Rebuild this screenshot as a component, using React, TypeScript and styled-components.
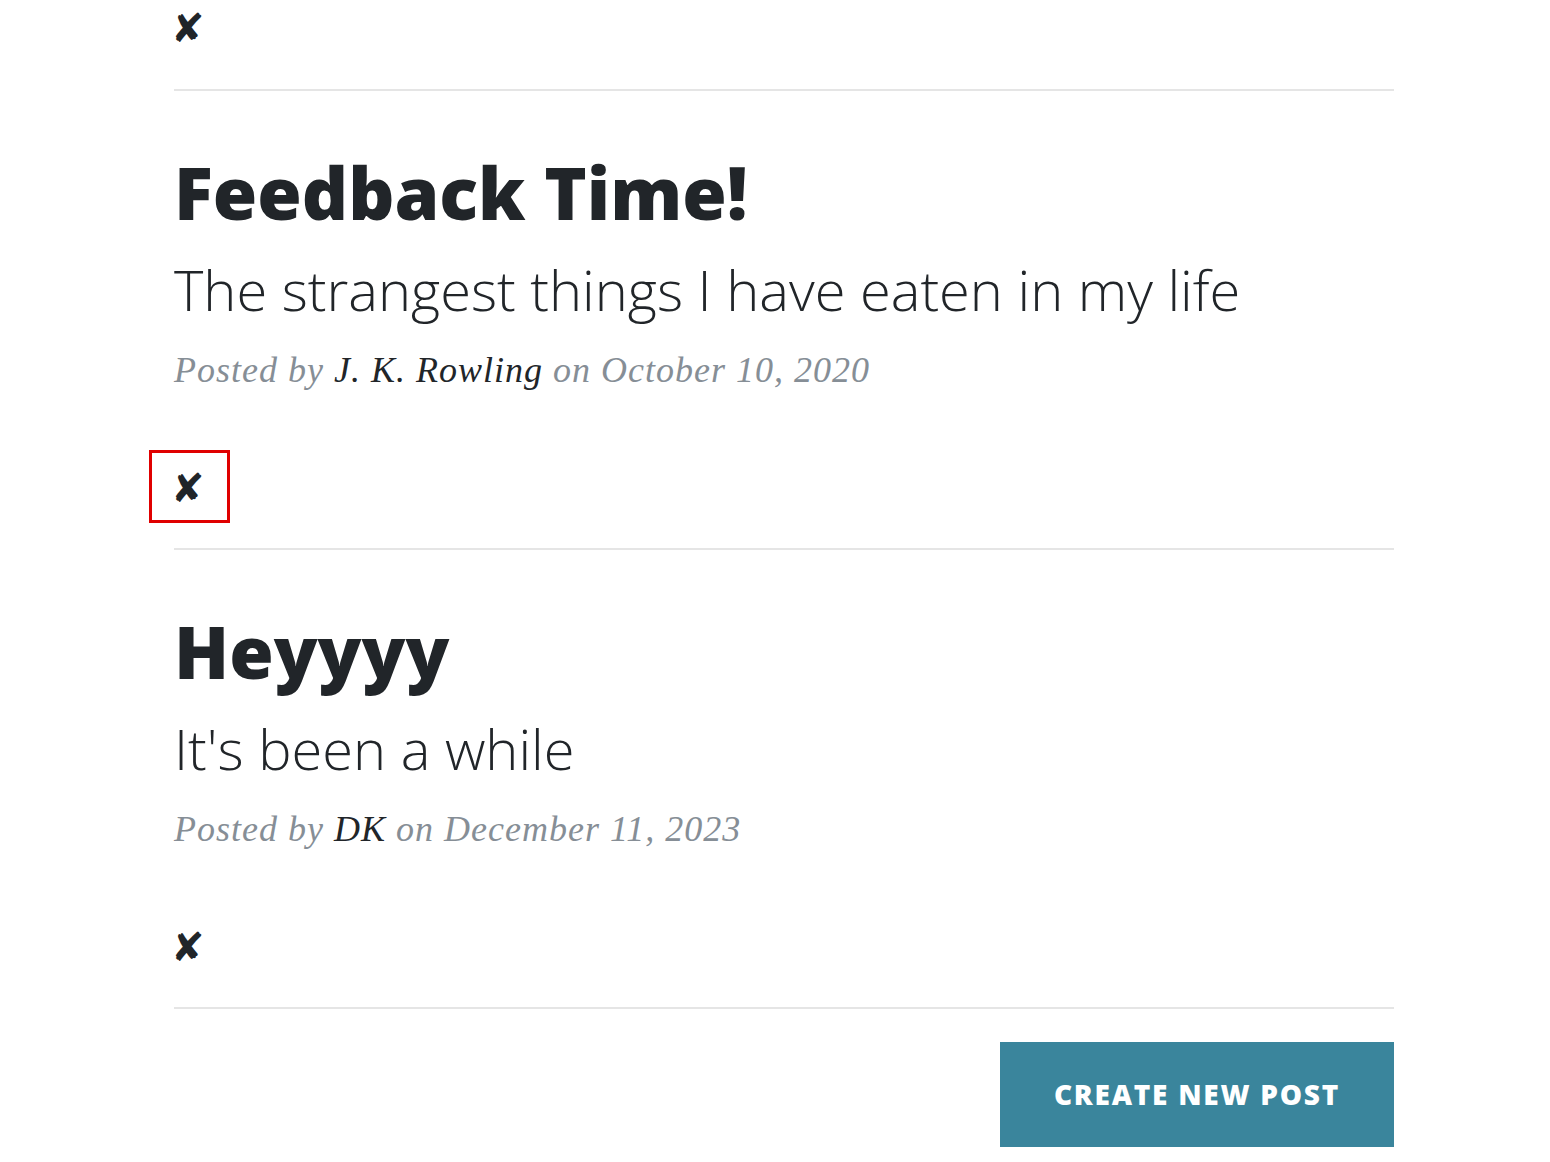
import React from "react";
import styled, { createGlobalStyle } from "styled-components";

const GlobalStyle = createGlobalStyle`
  html, body { margin: 0; padding: 0; background: #ffffff; }
  body {
    font-family: "Open Sans", "Liberation Sans", sans-serif;
    color: #212529;
    -webkit-font-smoothing: antialiased;
  }
`;

const Page = styled.main`
  width: 1220px;
  margin-left: 174px;
  display: flex;
  flex-direction: column;
`;

const DeleteRow = styled.div<{ $first?: boolean }>`
  height: ${(p) => (p.$first ? "86px" : "85px")};
  padding-top: ${(p) => (p.$first ? "3px" : "66px")};
  display: flex;
  align-items: flex-start;
`;

const DeleteLink = styled.a<{ $highlight?: boolean }>`
  position: relative;
  display: inline-block;
  margin-left: -3px;
  font-family: "DejaVu Sans", sans-serif;
  font-size: 40px;
  line-height: 50px;
  color: #212529;
  text-decoration: none;
  cursor: pointer;
  ${(p) =>
    p.$highlight
      ? `
    &::after {
      content: "";
      position: absolute;
      top: -13px;
      bottom: -10px;
      left: -22px;
      right: -25px;
      border: 3px solid #e00000;
      pointer-events: none;
    }
  `
      : ""}
`;

const Divider = styled.hr`
  margin: 0;
  border: 0;
  height: 2px;
  background: #e5e5e5;
`;

const Preview = styled.article`
  display: flex;
  flex-direction: column;
  padding-top: 58px;
`;

const PostLink = styled.a`
  color: #212529;
  text-decoration: none;
  display: flex;
  flex-direction: column;
`;

const Title = styled.h2`
  margin: 0;
  font-size: 72px;
  line-height: 86px;
  font-weight: 800;
`;

const Subtitle = styled.h3`
  margin: 21px 0 0;
  font-size: 56px;
  line-height: 67px;
  font-weight: 300;
`;

const Meta = styled.p`
  margin: 20px 0 0;
  font-family: "Liberation Serif", serif;
  font-style: italic;
  font-size: 36px;
  line-height: 54px;
  letter-spacing: 1px;
  color: #868e96;
`;

const Author = styled.a`
  color: #212529;
  text-decoration: none;
`;

const ButtonRow = styled.div`
  display: flex;
  justify-content: flex-end;
  padding-top: 33px;
`;

const Button = styled.a`
  display: inline-block;
  background: #3a859c;
  color: #ffffff;
  font-family: "Open Sans", sans-serif;
  font-weight: 800;
  font-size: 28px;
  line-height: 42px;
  letter-spacing: 1.75px;
  text-transform: uppercase;
  text-decoration: none;
  padding: 31px 54px 32px;
`;

type Post = { title: string; subtitle: string; author: string; date: string };

const posts: Post[] = [
  {
    title: "Feedback Time!",
    subtitle: "The strangest things I have eaten in my life",
    author: "J. K. Rowling",
    date: "October 10, 2020",
  },
  {
    title: "Heyyyy",
    subtitle: "It's been a while",
    author: "DK",
    date: "December 11, 2023",
  },
];

export default function App() {
  return (
    <>
      <GlobalStyle />
      <Page>
        <DeleteRow $first>
          <DeleteLink href="#">✘</DeleteLink>
        </DeleteRow>
        <Divider />
        {posts.map((post, i) => (
          <React.Fragment key={post.title}>
            <Preview>
              <PostLink href="#">
                <Title>{post.title}</Title>
                <Subtitle>{post.subtitle}</Subtitle>
              </PostLink>
              <Meta>
                Posted by <Author href="#">{post.author}</Author> on {post.date}
              </Meta>
            </Preview>
            <DeleteRow>
              <DeleteLink href="#" $highlight={i === 0}>
                ✘
              </DeleteLink>
            </DeleteRow>
            <Divider />
          </React.Fragment>
        ))}
        <ButtonRow>
          <Button href="#">Create New Post</Button>
        </ButtonRow>
      </Page>
    </>
  );
}
